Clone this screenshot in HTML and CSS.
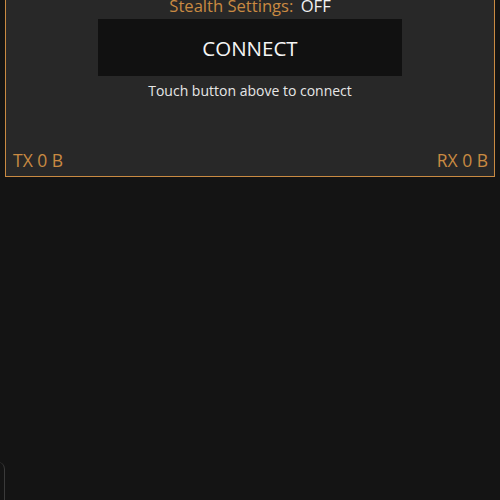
FILE: index.html
```html
<!DOCTYPE html>
<html>
<head>
<meta charset="utf-8">
<link rel="stylesheet" href="styles.css">
</head>
<body>
<div class="panel">
  <div class="stealth"><span class="label">Stealth Settings:</span> <span class="value">OFF</span></div>
  <div class="btn">CONNECT</div>
  <div class="hint">Touch button above to connect</div>
  <div class="stats"><span>TX 0 B</span><span>RX 0 B</span></div>
</div>
<div class="edge"></div>
</body>
</html>
```
FILE: styles.css
```css
html, body {
  margin: 0;
  padding: 0;
  background: #141414;
  height: 500px;
  overflow: hidden;
  font-family: "Open Sans", "Noto Sans", sans-serif;
}
.panel {
  margin: -30px 5px 0 5px;
  height: 207px;
  box-sizing: border-box;
  border: 1.5px solid #c98a42;
  background: #282828;
  display: flex;
  flex-direction: column;
  align-items: center;
  padding-top: 22px;
}
.stealth {
  font-size: 16.6px;
  line-height: 25px;
  color: #c98a42;
  height: 26px;
}
.stealth .value { color: #f2f2f2; margin-left: 3px; }
.btn {
  width: 304px;
  height: 57px;
  background: #111111;
  color: #f5f5f5;
  font-size: 20.5px;
  display: flex;
  align-items: center;
  justify-content: center;
}
.hint {
  margin-top: 5px;
  font-size: 14px;
  line-height: 20px;
  color: #e6e6e6;
}
.stats {
  margin-top: auto;
  align-self: stretch;
  display: flex;
  justify-content: space-between;
  padding: 0 6px 4px 7px;
  font-size: 17.5px;
  line-height: 24px;
  color: #c98a42;
}
.edge {
  position: absolute;
  left: -10px;
  top: 462px;
  width: 14px;
  height: 60px;
  border-right: 1px solid #3a3a3a;
  border-top-right-radius: 7px;
}
```
